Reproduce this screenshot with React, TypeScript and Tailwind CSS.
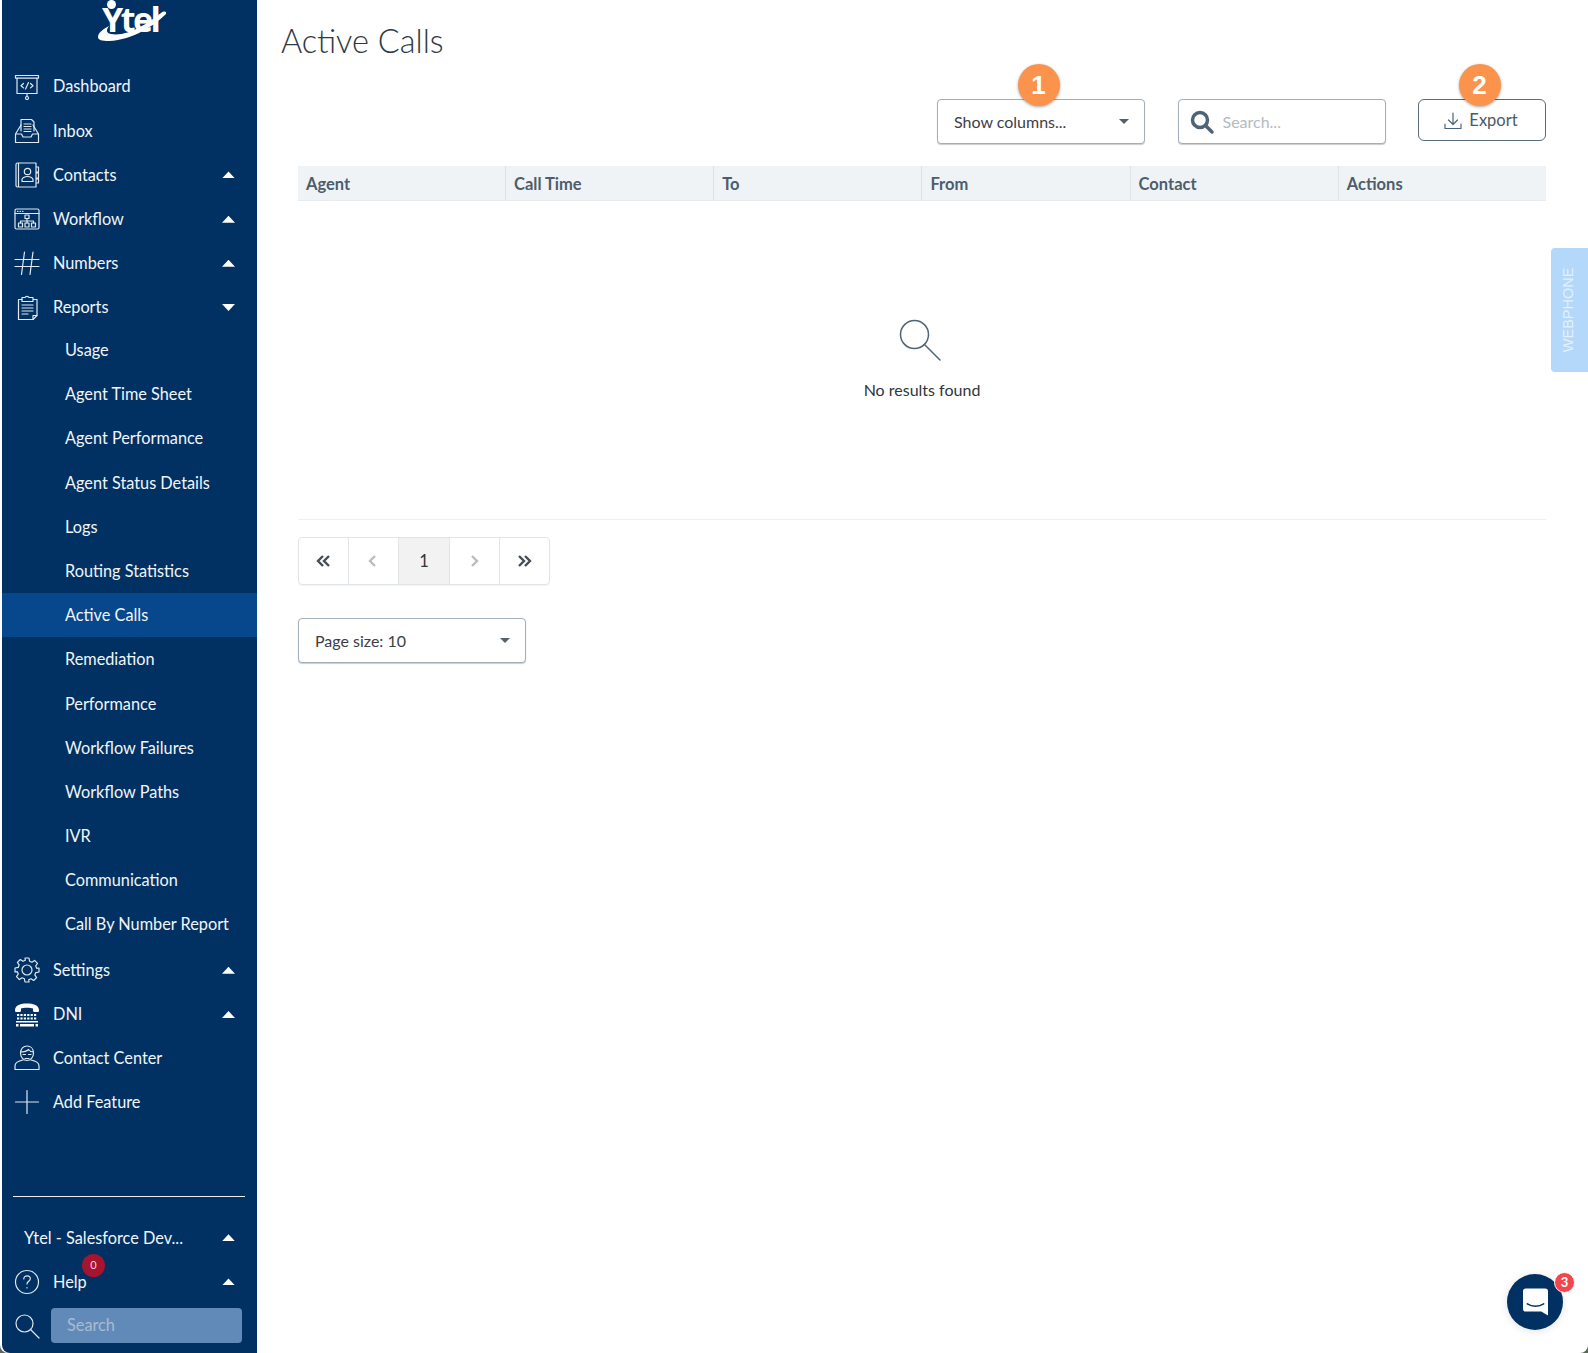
import { ReactNode } from 'react'

const stroke = { fill: 'none', stroke: '#e0e8f0', strokeWidth: 1.2, strokeLinecap: 'round', strokeLinejoin: 'round' } as const

function Ico({ children }: { children: ReactNode }) {
  return (
    <svg width="26" height="26" viewBox="0 0 26 26" className="shrink-0" {...stroke}>
      {children}
    </svg>
  )
}

const icons: Record<string, ReactNode> = {
  dashboard: (
    <Ico>
      <path d="M1.500 1.500h23v2.600h-23zM3 4.100v15.400h20V4.100M13 19.500v3" />
      <circle cx="13" cy="24" r="1.500" />
      <path d="M9.500 9.500l-2.500 2.200 2.500 2.200M16.500 9.500l2.500 2.200-2.500 2.200M14.500 8.500l-3 6.500" />
    </Ico>
  ),
  inbox: (
    <Ico>
      <path d="M7 13V1.500h10.500L20 4v9M10 6h7M10 8.500h7M10 11h7M10 13.500h7" />
      <path d="M7 7L1.500 16h6l1.500 3h8l1.500-3h6L19 7M1.500 16v8.500h23V16" />
    </Ico>
  ),
  contacts: (
    <Ico>
      <path d="M2 2.500c0-1 .8-1.500 1.500-1.500H22v24H3.500C2.800 25 2 24.500 2 23.500zM4.500 1v24M22 5h2.500v5H22M22 11h2.500v5H22M22 17h2.500v4H22" />
      <circle cx="13.500" cy="9.500" r="3.200" />
      <path d="M8 19.500v-2c0-1.500 2.500-3 5.500-3s5.500 1.500 5.500 3v2z" />
    </Ico>
  ),
  workflow: (
    <Ico>
      <rect x="1" y="3" width="24" height="20" rx="1.500" />
      <path d="M1 7.500h24M3.500 5.300h.5M6 5.300h.5M8.500 5.300h.5" />
      <rect x="11" y="9" width="4" height="3.500" />
      <path d="M13 12.500v2.500M6.500 17v-2h13v2M13 15v2" />
      <rect x="4.500" y="17" width="4" height="4" />
      <rect x="11" y="17" width="4" height="4" />
      <rect x="17.500" y="17" width="4" height="4" />
    </Ico>
  ),
  numbers: (
    <Ico>
      <path d="M1 9.500h24M1 16.500h24M10.500 2L7.500 24.500M19 2L16 24.500" />
    </Ico>
  ),
  reports: (
    <Ico>
      <path d="M8 4.500H4.500v20h14.500l4-4v-16h-3.500" />
      <path d="M8 2.500h3c.5-1.500 3.500-1.500 4 0h4v4H8zM8 10h11M8 13h11M8 16h11M8 19h6" />
      <path d="M19 24.500v-4h4" />
    </Ico>
  ),
  settings: (
    <Ico>
      <path d="M11 1h4l.6 3.200 2.300 1 2.700-1.800 2.900 2.900-1.800 2.700 1 2.300L25 11v4l-3.200.6-1 2.300 1.800 2.700-2.900 2.900-2.700-1.800-2.300 1L15 25h-4l-.6-3.200-2.300-1-2.700 1.800-2.900-2.900 1.800-2.700-1-2.300L1 15v-4l3.200-.6 1-2.300-1.800-2.700 2.900-2.900 2.700 1.800 2.300-1z" />
      <circle cx="13" cy="13" r="5" />
    </Ico>
  ),
  dni: (
    <svg width="26" height="26" viewBox="0 0 26 26" className="shrink-0" fill="#ffffff">
      <path d="M1 8.500C1 3 7 1.500 13 1.500S25 3 25 8.500c0 1-.5 1.500-1.500 1.500h-3c-1 0-1.500-.6-1.500-1.500V6.500C17 5.500 9 5.500 7 6.500v2c0 .9-.5 1.500-1.500 1.500h-3C1.500 10 1 9.500 1 8.500z" />
      <path d="M3 12h2.200v2H3zM6.400 12h2.200v2H6.400zM9.800 12H12v2H9.800zM13.200 12h2.200v2h-2.200zM16.600 12h2.200v2h-2.200zM20 12h2.200v2H20zM3 15.400h2.200v2H3zM6.400 15.400h2.200v2H6.400zM9.800 15.400H12v2H9.800zM13.200 15.400h2.200v2h-2.200zM16.600 15.400h2.200v2h-2.200zM20 15.400h2.200v2H20zM2 19h22v1.500H2zM2 22h2.500v2.500H2zM6 22h14v2.500H6zM21.500 22H24v2.500h-2.500z" />
    </svg>
  ),
  center: (
    <Ico>
      <path d="M6.500 8C6.500 3.500 9.500 1 13 1s6.500 2.500 6.500 7c0 4.500-3 7.500-6.500 7.500S6.500 12.500 6.500 8zM6.500 7c3 0 6-.5 8-2.500 1 1.500 3 2.500 5 2.500" />
      <path d="M9 9.500h2.500M14.500 9.500H17M11 13.500h4" />
      <path d="M9 15c-4 .8-8 2.500-8 6v3.500h24V21c0-3.500-4-5.200-8-6" />
    </Ico>
  ),
  add: (
    <Ico>
      <path d="M1.500 13h23M13 1.500v23" />
    </Ico>
  ),
  help: (
    <Ico>
      <circle cx="13" cy="13" r="11.500" />
      <path d="M9.800 10c0-2 1.500-3.200 3.300-3.200s3.200 1.200 3.200 2.900c0 2.500-3.300 2.600-3.300 5.300M13 18.500v.4" />
    </Ico>
  ),
  search: (
    <Ico>
      <circle cx="10.500" cy="10.500" r="8.500" />
      <path d="M16.500 16.500l8.500 8.500" />
    </Ico>
  ),
}

function Caret({ up = true, color = 'bg-white' }: { up?: boolean; color?: string }) {
  return (
    <span
      className={`block w-[13px] h-[7px] ${color} ${up ? '[clip-path:polygon(50%_0,100%_100%,0_100%)]' : '[clip-path:polygon(0_0,100%_0,50%_100%)]'}`}
    />
  )
}

function NavRow({ icon, label, caret }: { icon: string; label: string; caret?: 'up' | 'down' }) {
  return (
    <div className="flex items-center h-[44.2px] pl-[12px] pr-[22px]">
      {icons[icon]}
      <span className="ml-[13px] flex-1">{label}</span>
      {caret && <Caret up={caret === 'up'} />}
    </div>
  )
}

const reportItems = [
  'Usage',
  'Agent Time Sheet',
  'Agent Performance',
  'Agent Status Details',
  'Logs',
  'Routing Statistics',
  'Active Calls',
  'Remediation',
  'Performance',
  'Workflow Failures',
  'Workflow Paths',
  'IVR',
  'Communication',
  'Call By Number Report',
]

function Sidebar() {
  return (
    <aside className="w-[255px] shrink-0 ml-[2px] bg-[#013162] text-[#f1f5f9] text-[16.3px] flex flex-col rounded-bl-[8px] overflow-hidden">
      {/* logo */}
      <div className="h-[64.5px] relative shrink-0">
        <span className="absolute left-[100px] top-[2px] font-['Open_Sans',sans-serif] font-bold text-[34px] leading-[34px] tracking-[-2.5px] text-white">
          Ytel
        </span>
        <span className="absolute left-[105px] top-0 w-[9px] h-[9px] rounded-full bg-white" />
        <svg width="72" height="32" viewBox="0 0 72 32" className="absolute left-[95px] top-[10px]" fill="#ffffff">
          <path d="M1 27C1 23 6 19 12 16 9 20 9 23 14 24 30 27 50 14 64 3 67 1 70 1 69 4 58 15 36 30 12 31 5 31 1 30 1 27z" />
        </svg>
      </div>

      <NavRow icon="dashboard" label="Dashboard" />
      <NavRow icon="inbox" label="Inbox" />
      <NavRow icon="contacts" label="Contacts" caret="up" />
      <NavRow icon="workflow" label="Workflow" caret="up" />
      <NavRow icon="numbers" label="Numbers" caret="up" />
      <NavRow icon="reports" label="Reports" caret="down" />

      <div className="-mt-[1.5px] mb-[1.5px]">
        {reportItems.map((item) => (
          <div
            key={item}
            className={`h-[44.2px] flex items-center pl-[63px] ${item === 'Active Calls' ? 'bg-[#07478b]' : ''}`}
          >
            {item}
          </div>
        ))}
      </div>

      <NavRow icon="settings" label="Settings" caret="up" />
      <NavRow icon="dni" label="DNI" caret="up" />
      <div className="-mt-[0.5px]">
        <NavRow icon="center" label="Contact Center" />
      </div>
      <NavRow icon="add" label="Add Feature" />

      <div className="mt-auto">
        <div className="mx-[11px] h-px bg-[#e8eef4] w-[232px]" />
        <div className="mt-[19px] h-[44px] flex items-center pl-[22px] pr-[22px]">
          <span className="flex-1">Ytel - Salesforce Dev...</span>
          <Caret />
        </div>
        <div className="relative mb-[4px]">
          <NavRow icon="help" label="Help" caret="up" />
          <span className="absolute left-[80px] top-[-6px] w-[23px] h-[23px] rounded-full bg-[#a8142f] text-[11px] text-[#f4d9de] flex items-center justify-center">
            0
          </span>
        </div>
        <div className="flex items-center pl-[12px] mb-[10px] h-[35px]">
          {icons.search}
          <div className="ml-[11px] w-[191px] h-[35px] rounded-[4px] bg-[#628ab9] text-[#a9bbd0] flex items-center pl-[16px]">
            Search
          </div>
        </div>
      </div>
    </aside>
  )
}

function Badge({ n }: { n: number }) {
  return (
    <span className="absolute left-1/2 top-[-35px] -ml-[23.5px] w-[42px] h-[42px] rounded-full bg-[#fb934d] text-white text-[26px] font-bold font-['Liberation_Sans',sans-serif] flex items-center justify-center shadow-[0_1px_3px_rgba(0,0,0,0.35)] z-10">
      {n}
    </span>
  )
}

function Select({ label, width }: { label: string; width: string }) {
  return (
    <div className={`${width} h-[45px] border border-[#a3aeb9] rounded-[4px] shadow-[0_1px_1px_rgba(80,90,100,0.3)] flex items-center pl-[16px] pr-[15px] text-[#3b4046] bg-white`}>
      <span className="flex-1">{label}</span>
      <Caret up={false} color="bg-[#56616b] !w-[10px] !h-[5px]" />
    </div>
  )
}

const columns = ['Agent', 'Call Time', 'To', 'From', 'Contact', 'Actions']

function Main() {
  return (
    <main className="flex-1 min-w-0 pl-[24px] text-[16px]">
      <h1 className="pt-[18px] h-[99px] text-[32.5px] leading-[46px] font-light text-[#2f3942]">Active Calls</h1>

      <div className="ml-[17px] mr-[42px]">
        <div className="flex justify-end items-start gap-[32.5px] h-[67px]">
          <div className="relative">
            <Badge n={1} />
            <Select label="Show columns..." width="w-[208px]" />
          </div>
          <div className="w-[208px] h-[45px] border border-[#a3aeb9] rounded-[4px] shadow-[0_1px_1px_rgba(80,90,100,0.3)] flex items-center pl-[10px] bg-white">
            <svg width="26" height="26" viewBox="0 0 26 26" fill="none" stroke="#4e6475" strokeWidth="3.500" strokeLinecap="round">
              <circle cx="11" cy="11" r="7.500" />
              <path d="M17 17l6 6" />
            </svg>
            <span className="ml-[8px] text-[#b4babf]">Search...</span>
          </div>
          <div className="relative">
            <Badge n={2} />
            <div className="w-[128px] h-[42px] border border-[#5a6b79] rounded-[6px] flex items-center justify-center gap-[7px] pr-[2px] pt-[1px] text-[16.5px] text-[#4a5a68]">
              <svg width="18" height="18" viewBox="0 0 18 18" fill="none" stroke="#4e6475" strokeWidth="1.200" strokeLinecap="round" strokeLinejoin="round">
                <path d="M9 1v11M4.500 8L9 12.500 13.500 8M1 12v4.500h16V12" />
              </svg>
              Export
            </div>
          </div>
        </div>

        <div className="grid grid-cols-[207px_repeat(5,1fr)] h-[35px] bg-[#eff3f6] border-b border-[#e6ebef] text-[16.5px] font-bold text-[#4d5d6b]">
          {columns.map((c, i) => (
            <div key={c} className={`flex items-center pt-[3px] ${i > 0 ? 'pl-[8px] border-l border-[#dde3e8]' : 'pl-[8px]'}`}>
              {c}
            </div>
          ))}
        </div>

        <div className="h-[319px] border-b border-[#eef0f2] flex flex-col items-center pt-[118px] text-[#30363c]">
          <svg width="42" height="42" viewBox="0 0 42 42" fill="none" stroke="#4e6475" strokeWidth="1.500" strokeLinecap="round" className="-ml-[5px]">
            <circle cx="15.500" cy="15.500" r="14" />
            <path d="M25.500 25.500L41 41" />
          </svg>
          <div className="mt-[19px] leading-[20px]">No results found</div>
        </div>

        <div className="mt-[17px] w-[252px] h-[48px] border border-[#e2e5e8] rounded-[4px] flex shadow-[0_1px_1px_rgba(0,0,0,0.05)] text-[16.5px]">
          <div className="flex-1 flex items-center justify-center border-r border-[#e2e5e8]">
            <PageArrows double dir="left" color="#454d55" />
          </div>
          <div className="flex-1 flex items-center justify-center border-r border-[#e2e5e8]">
            <PageArrows dir="left" color="#b9bdc1" />
          </div>
          <div className="flex-1 flex items-center justify-center border-r border-[#e2e5e8] bg-[#f2f2f2] text-[#30363c]">1</div>
          <div className="flex-1 flex items-center justify-center border-r border-[#e2e5e8]">
            <PageArrows dir="right" color="#b9bdc1" />
          </div>
          <div className="flex-1 flex items-center justify-center">
            <PageArrows double dir="right" color="#454d55" />
          </div>
        </div>

        <div className="mt-[33px]">
          <Select label="Page size: 10" width="w-[228px]" />
        </div>
      </div>
    </main>
  )
}

function PageArrows({ dir, double, color }: { dir: 'left' | 'right'; double?: boolean; color: string }) {
  const d = dir === 'left'
    ? (double ? 'M7 2L2 7l5 5M13 2L8 7l5 5' : 'M9 2L4 7l5 5')
    : (double ? 'M2 2l5 5-5 5M8 2l5 5-5 5' : 'M5 2l5 5-5 5')
  return (
    <svg width="15" height="14" viewBox="0 0 15 14" fill="none" stroke={color} strokeWidth="2.400">
      <path d={d} />
    </svg>
  )
}

export default function App() {
  return (
    <div className="h-screen bg-[#5a6a58] overflow-hidden font-['Lato',sans-serif]">
      <div className="relative h-full bg-white rounded-b-[8px] flex overflow-hidden">
        <Sidebar />
        <Main />

        {/* webphone tab */}
        <div className="absolute right-0 top-[248px] w-[37px] h-[124px] bg-[#b3d8f9] rounded-l-[4px] flex items-center justify-center">
          <span className="-rotate-90 whitespace-nowrap text-[14.5px] font-['Liberation_Sans',sans-serif] text-[#e3f0fc]">WEBPHONE</span>
        </div>

        {/* chat launcher */}
        <div className="absolute left-[1507px] top-[1274px] w-[56px] h-[56px] rounded-full bg-[#013162] flex items-center justify-center shadow-[0_1px_8px_rgba(0,0,0,0.12)]">
          <svg width="25" height="28" viewBox="0 0 26 28" fill="#ffffff">
            <path d="M3 0h20a3 3 0 0 1 3 3v25l-7-4H3a3 3 0 0 1-3-3V3a3 3 0 0 1 3-3z" />
            <path d="M4.500 16c5 3.200 12 3.200 17 0" fill="none" stroke="#013162" strokeWidth="1.600" strokeLinecap="round" />
          </svg>
        </div>
        <span className="absolute left-[1554px] top-[1272px] w-[21px] h-[21px] rounded-full bg-[#f2454d] border border-white text-white text-[13px] font-bold flex items-center justify-center">
          3
        </span>
      </div>
    </div>
  )
}
